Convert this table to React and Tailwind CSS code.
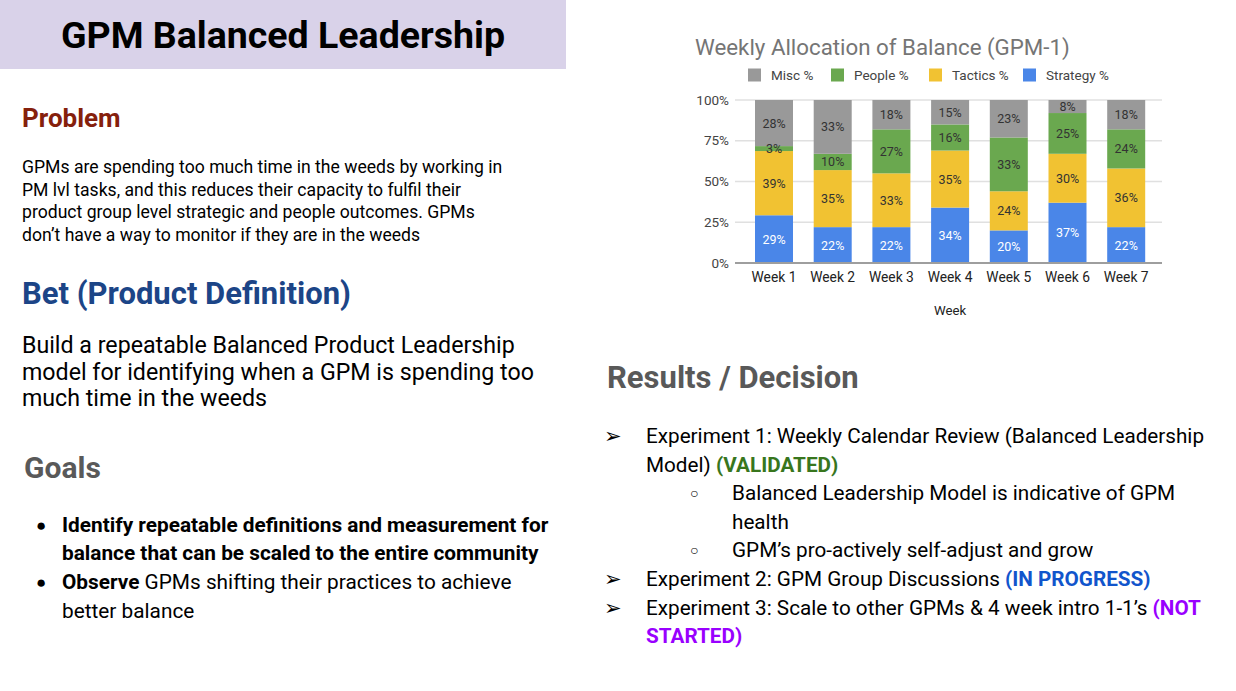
import React from "react";

const weeks = [
  { s: 29, t: 39, p: 3, m: 28 },
  { s: 22, t: 35, p: 10, m: 33 },
  { s: 22, t: 33, p: 27, m: 18 },
  { s: 34, t: 35, p: 16, m: 15 },
  { s: 20, t: 24, p: 33, m: 23 },
  { s: 37, t: 30, p: 25, m: 8 },
  { s: 22, t: 36, p: 24, m: 18 },
];

const COLORS = { s: "#4a86e8", t: "#f1c232", p: "#6aa84f", m: "#999999" };

function Chart() {
  const top = 75;
  const bottom = 238;
  const h = bottom - top;
  const grid = [0, 25, 50, 75, 100];
  const legend = [
    { x: 68, c: COLORS.m, label: "Misc %" },
    { x: 151, c: COLORS.p, label: "People %" },
    { x: 249, c: COLORS.t, label: "Tactics %" },
    { x: 343, c: COLORS.s, label: "Strategy %" },
  ];

  return (
    <svg width="490" height="300" viewBox="0 0 490 300" className="block" style={{ fontFamily: "Roboto, Arial, sans-serif" }}>
      <text x="15" y="29.5" fontSize="22.3" fill="#757575">
        Weekly Allocation of Balance (GPM-1)
      </text>
      {legend.map((l) => (
        <g key={l.label}>
          <rect x={l.x} y="43.5" width="13" height="13" fill={l.c} />
          <text x={l.x + 23} y="55" fontSize="13.5" fill="#444">
            {l.label}
          </text>
        </g>
      ))}
      {grid.map((g) => {
        const y = bottom - (g / 100) * h;
        return (
          <g key={g}>
            {g > 0 && <line x1="55" x2="482" y1={y} y2={y} stroke="#e0e0e0" strokeWidth="1.5" />}
            <text x="49" y={y + 4.5} fontSize="13.5" fill="#444" textAnchor="end">
              {g}%
            </text>
          </g>
        );
      })}
      {weeks.map((w, i) => {
        const cx = 94 + i * 58.7;
        const total = w.s + w.t + w.p + w.m;
        let y = bottom;
        const segs = ["s", "t", "p", "m"].map((k) => {
          const sh = (w[k] / total) * h;
          y -= sh;
          return { k, y, sh };
        });
        return (
          <g key={i}>
            {segs.map((sg) => (
              <rect key={sg.k} x={cx - 19} y={sg.y} width="38" height={sg.sh} fill={COLORS[sg.k]} />
            ))}
            {segs.map((sg) => (
              <text
                key={sg.k + "l"}
                x={cx}
                y={sg.y + sg.sh / 2 + 4.5}
                fontSize="12.5"
                textAnchor="middle"
                fill={sg.k === "s" ? "#ffffff" : "#333"}
              >
                {w[sg.k]}%
              </text>
            ))}
            <text x={cx} y="257" fontSize="13.8" fill="#222" textAnchor="middle">
              Week {i + 1}
            </text>
          </g>
        );
      })}
      <line x1="55" x2="482" y1={bottom} y2={bottom} stroke="#9e9e9e" strokeWidth="2" />
      <text x="270" y="289.5" fontSize="13.2" fill="#222" textAnchor="middle">
        Week
      </text>
    </svg>
  );
}

function Arrow() {
  return <span className="w-[42px] shrink-0 font-['DejaVu_Sans',sans-serif] text-[21px] leading-[28.6px]">➢</span>;
}

function Circle() {
  return <span className="w-[42px] shrink-0 text-[14px]">○</span>;
}

export default function App() {
  return (
    <div className="w-[1236px] h-[691px] bg-white flex overflow-hidden text-black font-['Roboto','Liberation_Sans',sans-serif]">
      {/* Left column */}
      <div className="w-[566px] shrink-0 flex flex-col">
        <div className="h-[69px] bg-[#d9d2e9] flex items-center justify-center">
          <h1 className="text-[37.5px] font-bold leading-none pt-[2px]">GPM Balanced Leadership</h1>
        </div>

        <div className="pl-[22px]">
          <h2 className="mt-[34px] text-[26px] leading-[30px] font-bold text-[#85200c]">Problem</h2>
          <p className="mt-[23px] w-[540px] text-[17.6px] leading-[22.6px]">
            GPMs are spending too much time in the weeds by working in
            <br />
            PM lvl tasks, and this reduces their capacity to fulfil their
            <br />
            product group level strategic and people outcomes. GPMs
            <br />
            don’t have a way to monitor if they are in the weeds
          </p>

          <h2 className="mt-[30px] text-[31px] leading-[36px] font-bold text-[#1c4587]">Bet (Product Definition)</h2>
          <p className="mt-[20px] w-[540px] text-[23.2px] leading-[26.5px]">
            Build a repeatable Balanced Product Leadership
            <br />
            model for identifying when a GPM is spending too
            <br />
            much time in the weeds
          </p>

          <h2 className="mt-[38px] pl-[2px] text-[30px] leading-[36px] font-bold text-[#595959]">Goals</h2>
          <ul className="mt-[25px] pl-[14px] text-[20.8px] leading-[28.6px]">
            <li className="flex">
              <span className="w-[26px] shrink-0 text-[17px]">●</span>
              <span className="w-[505px] font-bold">
                Identify repeatable definitions and measurement for
                <br />
                balance that can be scaled to the entire community
              </span>
            </li>
            <li className="flex">
              <span className="w-[26px] shrink-0 text-[17px]">●</span>
              <span className="w-[505px]">
                <b>Observe</b> GPMs shifting their practices to achieve
                <br />
                better balance
              </span>
            </li>
          </ul>
        </div>
      </div>

      {/* Right column */}
      <div className="flex-1 flex flex-col">
        <div className="mt-[25px] ml-[114px]">
          <Chart />
        </div>

        <h2 className="mt-[35px] ml-[41px] text-[31px] leading-[36px] font-bold text-[#595959]">Results / Decision</h2>

        <ul className="mt-[26px] ml-[38px] text-[20.7px] leading-[28.6px]">
          <li className="flex">
            <Arrow />
            <span className="w-[585px]">
              Experiment 1: Weekly Calendar Review (Balanced Leadership
              <br />
              Model) <b className="text-[#38761d]">(VALIDATED)</b>
            </span>
          </li>
          <li className="flex pl-[86px]">
            <Circle />
            <span className="w-[500px]">
              Balanced Leadership Model is indicative of GPM
              <br />
              health
            </span>
          </li>
          <li className="flex pl-[86px]">
            <Circle />
            <span className="w-[500px]">GPM’s pro-actively self-adjust and grow</span>
          </li>
          <li className="flex">
            <Arrow />
            <span className="w-[585px]">
              Experiment 2: GPM Group Discussions <b className="text-[#1155cc]">(IN PROGRESS)</b>
            </span>
          </li>
          <li className="flex">
            <Arrow />
            <span className="w-[585px]">
              Experiment 3: Scale to other GPMs &amp; 4 week intro 1-1’s <b className="text-[#9900ff]">(NOT</b>
              <br />
              <b className="text-[#9900ff]">STARTED)</b>
            </span>
          </li>
        </ul>
      </div>
    </div>
  );
}
